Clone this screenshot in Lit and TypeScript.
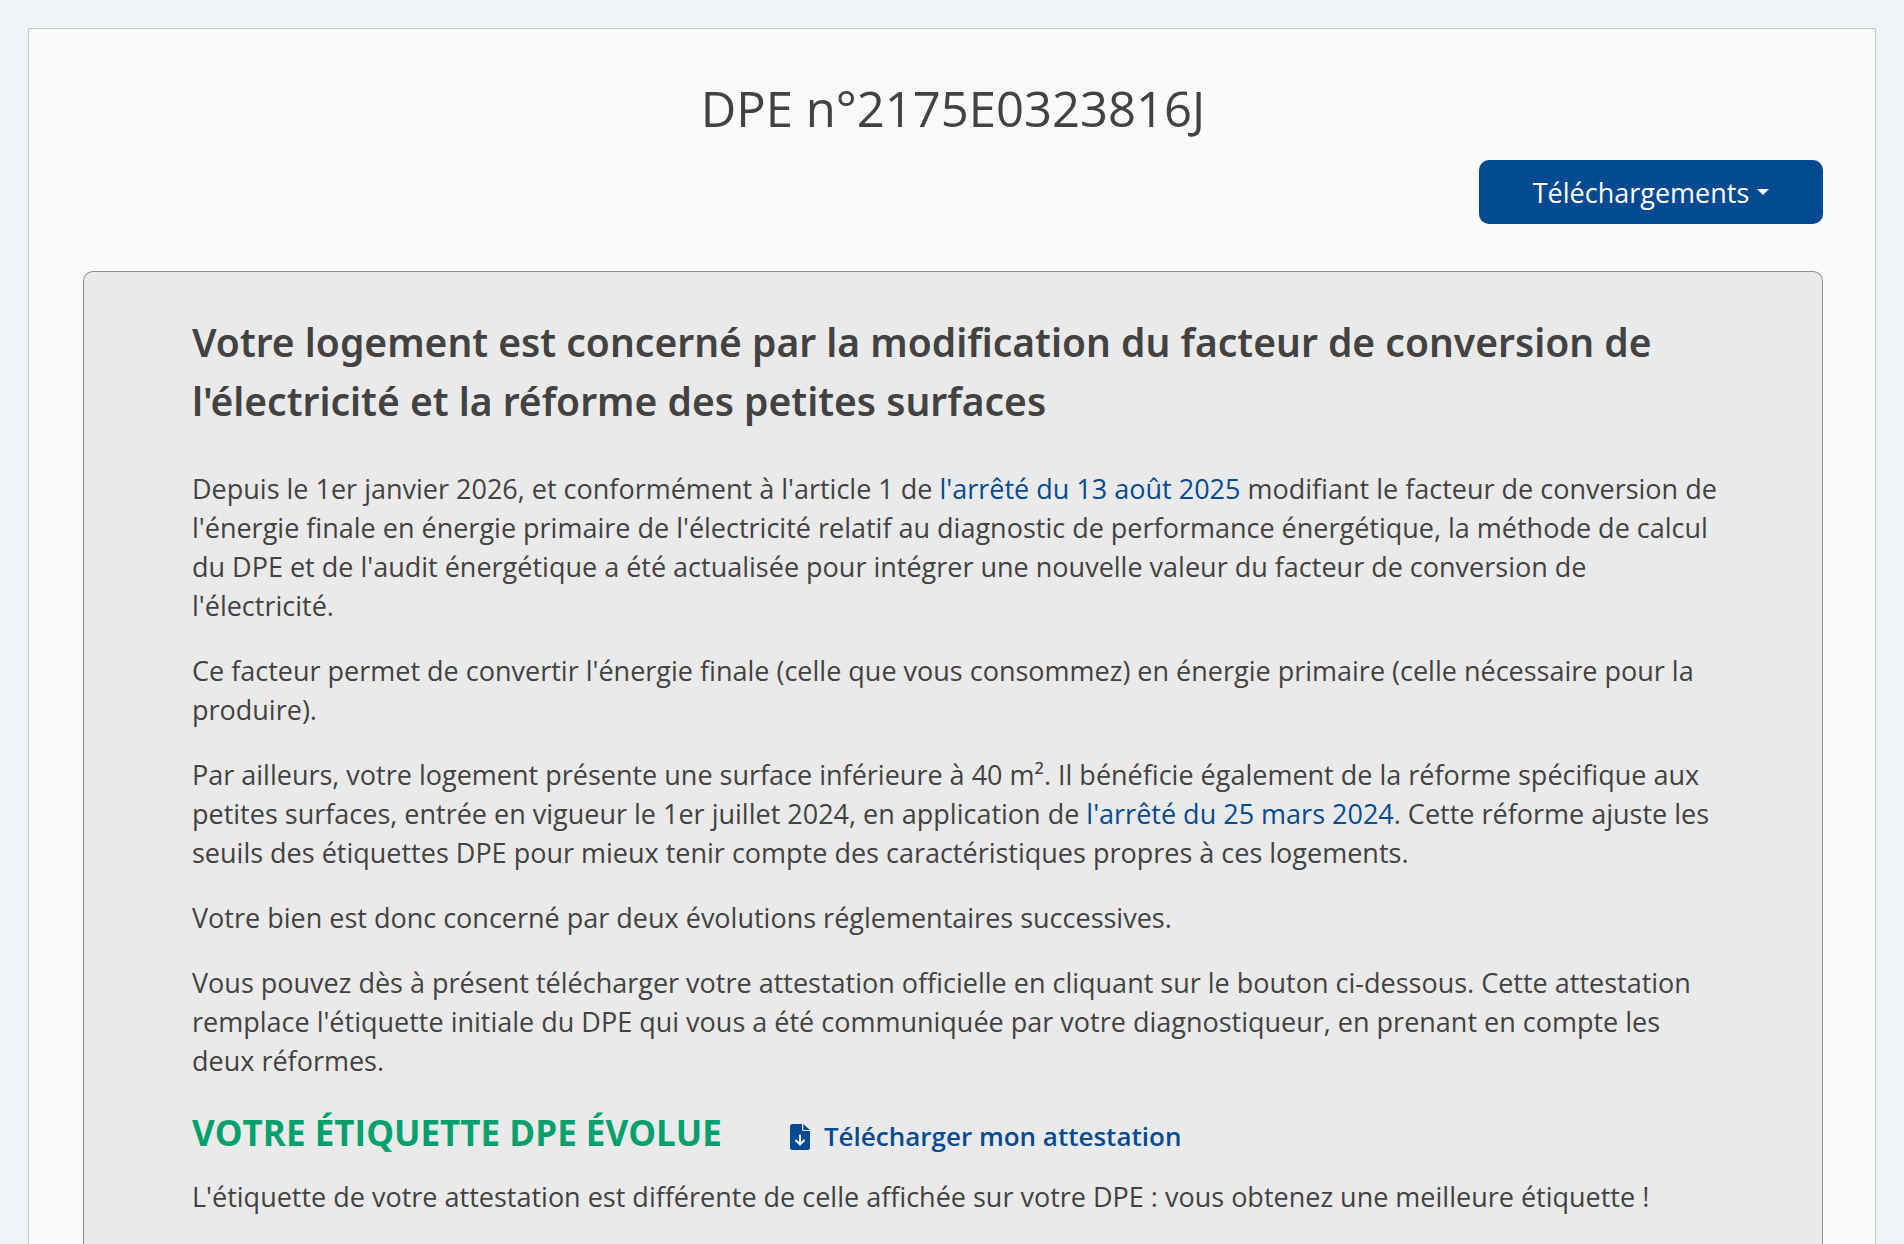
import { LitElement, html, css } from "lit";
import { customElement } from "lit/decorators.js";

@customElement("app-root")
class AppRoot extends LitElement {
  static styles = css`
    :host {
      display: flex;
      flex-direction: column;
      box-sizing: border-box;
      min-height: 100vh;
      padding: 28px 28px 0;
      background: #eef3f6;
      color: #424242;
      font-family: "Open Sans", "Noto Sans", sans-serif;
      font-size: 27px;
      line-height: 39px;
    }
    h1,
    h2,
    h3,
    p {
      margin: 0;
    }
    a {
      color: #044a91;
      text-decoration: none;
    }
    .page {
      flex: 1;
      display: flex;
      flex-direction: column;
      padding: 49px 52px 0 54px;
      border: 1px solid #c8c9ca;
      border-bottom: 0;
      background: #fafafa;
    }
    .title {
      font-size: 49px;
      font-weight: 400;
      line-height: 60px;
      text-align: center;
    }
    .downloads {
      display: flex;
      align-items: center;
      justify-content: center;
      gap: 8px;
      align-self: flex-end;
      min-width: 344px;
      height: 64px;
      margin: 22px 0 47px;
      border: 0;
      border-radius: 10px;
      background: #044a91;
      color: #fff;
      font: inherit;
      cursor: pointer;
    }
    .caret {
      border: 6px solid transparent;
      border-top-color: #fff;
      border-bottom: 0;
    }
    .card {
      flex: 1;
      padding: 40px 94px 26px 108px;
      border: 1px solid #8f9090;
      border-bottom: 0;
      border-radius: 10px 10px 0 0;
      background: #eaeaea;
    }
    .heading {
      margin-bottom: 39px;
      font-family: "Noto Sans", "Open Sans", sans-serif;
      font-size: 39px;
      font-weight: 600;
      line-height: 59px;
    }
    .text {
      display: flex;
      flex-direction: column;
      gap: 26px;
    }
    .evolution {
      display: flex;
      flex-wrap: wrap;
      align-items: baseline;
      column-gap: 68px;
      margin: 32px 0 21px;
    }
    .subheading {
      color: #00a06d;
      font-size: 35px;
      font-weight: 700;
      line-height: 42px;
      text-transform: uppercase;
    }
    .attestation {
      display: inline-flex;
      align-items: center;
      gap: 14px;
      font-size: 26px;
      font-weight: 600;
    }
    .attestation span {
      align-self: baseline;
    }
    .icon {
      width: 20px;
      height: 26px;
    }
  `;

  render() {
    return html`
      <main class="page">
        <h1 class="title">DPE n°2175E0323816J</h1>
        <button class="downloads" type="button" aria-haspopup="true">
          Téléchargements<span class="caret"></span>
        </button>
        <section class="card">
          <h2 class="heading">
            Votre logement est concerné par la modification du facteur de
            conversion de l'électricité et la réforme des petites surfaces
          </h2>
          <div class="text">
            <p>
              Depuis le 1er janvier 2026, et conformément à l'article 1 de
              <a href="#arrete-2025">l'arrêté du 13 août 2025</a> modifiant le
              facteur de conversion de l'énergie finale en énergie primaire de
              l'électricité relatif au diagnostic de performance énergétique, la
              méthode de calcul du DPE et de l'audit énergétique a été
              actualisée pour intégrer une nouvelle valeur du facteur de
              conversion de l'électricité.
            </p>
            <p>
              Ce facteur permet de convertir l'énergie finale (celle que vous
              consommez) en énergie primaire (celle nécessaire pour la
              produire).
            </p>
            <p>
              Par ailleurs, votre logement présente une surface inférieure à 40
              m². Il bénéficie également de la réforme spécifique aux petites
              surfaces, entrée en vigueur le 1er juillet 2024, en application de
              <a href="#arrete-2024">l'arrêté du 25 mars 2024</a>. Cette réforme
              ajuste les seuils des étiquettes DPE pour mieux tenir compte des
              caractéristiques propres à ces logements.
            </p>
            <p>
              Votre bien est donc concerné par deux évolutions réglementaires
              successives.
            </p>
            <p>
              Vous pouvez dès à présent télécharger votre attestation officielle
              en cliquant sur le bouton ci-dessous. Cette attestation remplace
              l'étiquette initiale du DPE qui vous a été communiquée par votre
              diagnostiqueur, en prenant en compte les deux réformes.
            </p>
          </div>
          <div class="evolution">
            <h3 class="subheading">Votre étiquette DPE évolue</h3>
            <a class="attestation" href="#attestation">
              <svg class="icon" viewBox="0 0 20 26" aria-hidden="true">
                <path
                  fill="currentColor"
                  d="M2.500 0H12v5.500A1.500 1.500 0 0 0 13.500 7H20v16.500A2.500 2.500 0 0 1 17.500 26h-15A2.500 2.500 0 0 1 0 23.500v-21A2.500 2.500 0 0 1 2.500 0zM13.300 0L20 6h-6.700z"
                />
                <path
                  fill="none"
                  stroke="#eaeaea"
                  stroke-width="2.200"
                  stroke-linecap="round"
                  stroke-linejoin="round"
                  d="M10 11.500v8.500M6 16.500l4 4 4-4"
                />
              </svg>
              <span>Télécharger mon attestation</span>
            </a>
          </div>
          <p>
            L'étiquette de votre attestation est différente de celle affichée
            sur votre DPE : vous obtenez une meilleure étiquette !
          </p>
        </section>
      </main>
    `;
  }
}
